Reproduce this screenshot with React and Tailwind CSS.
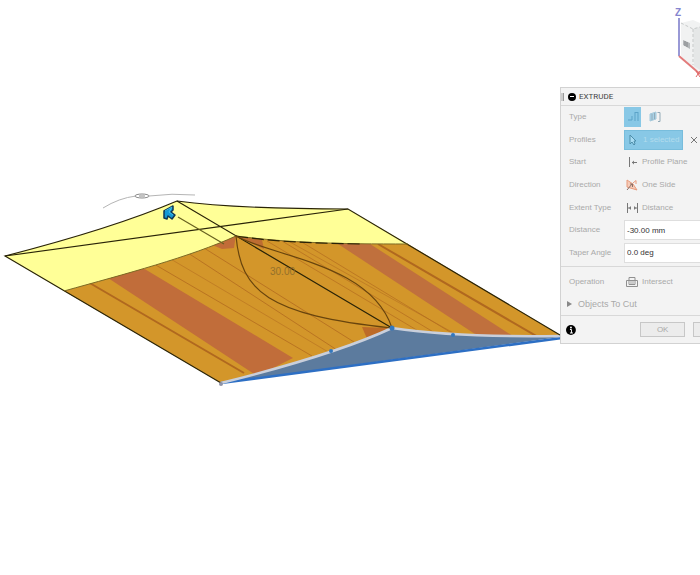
import React from 'react';

function Model() {
  return (
    <svg className="block h-[575px] w-[700px] shrink-0" viewBox="0 0 700 575" role="img" aria-label="Extruded body preview">
      <defs>
        <clipPath id="body">
          <path d="M64 291 C125 274 190 257 236 236 C290 243 340 244 408 244 L560 335 C500 337 440 335 392 328 C345 350 285 367 221 383Z" />
        </clipPath>
      </defs>
      <path d="M5 256 C75 238 130 221 177 201 C230 208 290 209 348 209 L408 244 L236 300 L64 291Z" fill="#ffff97" />
      <path d="M64 291 C125 274 190 257 236 236 C290 243 340 244 408 244 L560 335 C500 337 440 335 392 328 C345 350 285 367 221 383Z" fill="#d3962a" />
      <g clipPath="url(#body)">
        <path d="M105 276 L143 268 L293 358 L257 376Z" fill="#c16d3a" />
        <path d="M332 240 L367 242 L516 338 L481 338Z" fill="#c0703d" />
        <path d="M210 244 L236 234 L234 248 L222 249Z" fill="#c26d38" />
        <path d="M236 236 L262 240 L264 249Z" fill="#bd6d32" />
        <path d="M362 327 L388 328 L368 341Z" fill="#bd6b28" />
        <g stroke="#b0681f" fill="none">
          <path d="M88 282 L244 373" strokeWidth="2" />
          <path d="M378 244 L538 337" strokeWidth="2" />
          <path d="M154 264 L312 356 M188 253 L337 350 M204 248 L354 342" strokeWidth="1" opacity=".75" />
          <path d="M267 241 L420 332 M282 241 L435 333 M300 241 L455 335" strokeWidth="1" opacity=".65" />
          <path d="M169 258 L330 353 M290 242 L459 336" strokeWidth="1" opacity=".5" />
        </g>
      </g>
      <path d="M221 383 C285 367 345 350 392 328 C440 335 500 337 560 337Z" fill="#5c7b9e" />
      <path d="M221 383 L562 338" stroke="#2d6fc4" strokeWidth="2.5" fill="none" />
      <path d="M221 383 C285 367 345 350 392 328 C440 335 500 337 560 336" stroke="#c9cfdb" strokeWidth="2.5" fill="none" />
      <g fill="none" stroke="#292307" strokeWidth="1.2">
        <path d="M221 383 L5 256 C75 238 130 221 177 201 C230 208 290 209 348 209 L560 335" />
        <path d="M5 256 L348 209 M177 201 L392 328" />
        <path d="M178 217 L224 244" stroke="#67601f" />
        <path d="M64 291 C125 274 190 257 236 236" stroke="#7c6a25" strokeWidth="1" />
        <path d="M236 236 C290 243 340 244 408 244" stroke="#7c6a25" strokeWidth="1" />
        <path d="M236 236 C275 242 310 243 360 244" strokeDasharray="12 4" />
        <path d="M236 236 C241 291 267 315 392 328 M236 236 C274 257 371 264 392 328" stroke="#68440d" />
      </g>
      <g fill="#3478bd">
        <circle cx="331" cy="351" r="2" />
        <circle cx="392" cy="328" r="2.5" />
        <circle cx="453" cy="335" r="2" />
      </g>
      <circle cx="221" cy="384" r="2" fill="#8e93a8" />
      <text x="270" y="275" fontSize="10" fill="#94712b" className="font-['Liberation_Sans',sans-serif]">30.00</text>
      <path d="M103 208 Q119 198 136 196 M149 196 Q172 193 195 195" stroke="#b5b5b5" fill="none" />
      <ellipse cx="142" cy="196" rx="7" ry="2" fill="#fff" stroke="#888" />
      <path d="M139 196 H145" stroke="#888" />
      <path d="M164 211 L173 206 L173 210 L171 212 L175 215 L172 219 L168 216 L167 219 L164 218Z" fill="#1599d6" stroke="#123854" strokeWidth="1.5" strokeLinejoin="round" />
      <path d="M165 211 L172 207 L169 212 L173 215" stroke="#3fc0ec" fill="none" />

      <path d="M681 23 L693 20 L700 23 V71 L694 69 L681 56Z" fill="#f1f2f2" />
      <path d="M693 29 L700 27 V70 L694 66Z" fill="#e5e7e7" />
      <path d="M681 23 L693 29 L700 27 M693 29 V65" stroke="#c6c9c9" strokeDasharray="3 2" fill="none" />
      <path d="M679 18 V56" stroke="#7777c8" strokeWidth="1.5" />
      <path d="M679 56 L700 74" stroke="#e27b7b" strokeWidth="2" />
      <path d="M683 40 L690 43 V49 L683 45Z" fill="#b5b8ba" />
      <path d="M685 41 V46 M687 42 V47" stroke="#84878a" />
      <text x="675" y="16" fontSize="10" fontWeight="bold" fill="#8585cf" className="font-['Liberation_Sans',sans-serif]">Z</text>
      <path d="M696 71 L700 77 M700 71 L696 77" stroke="#e06666" fill="none" />
    </svg>
  );
}

function Icon({ children }) {
  return <svg className="size-3 shrink-0" viewBox="0 0 12 12" fill="none" stroke="#777" aria-hidden="true">{children}</svg>;
}

function Row({ label, htmlFor, children }) {
  return (
    <div className="flex items-center pl-2">
      {htmlFor ? <label htmlFor={htmlFor} className="w-[55px] shrink-0">{label}</label> : <span className="w-[55px] shrink-0">{label}</span>}
      {children}
    </div>
  );
}

function Choice({ icon, children }) {
  return <button type="button" className="flex items-center gap-1 pl-0.5">{icon}<span>{children}</span></button>;
}

export default function App() {
  const input = "h-5 w-24 border border-[#dedede] bg-white px-0.5 text-[#333] outline-none";
  return (
    <main className="relative min-h-screen w-full overflow-hidden bg-white font-['Liberation_Sans',Arial,sans-serif]">
      <Model />
      <section aria-label="Extrude" className="absolute left-[560px] top-[87px] w-[180px] border border-[#d2d2d2] bg-[#f3f3f3] text-[8px] leading-[10px] text-[#a9a9a9]">
        <header className="flex h-[18px] items-center border-b border-[#d8d8d8] text-[#444]">
          <span className="mr-1 h-2 w-[3px] border-r border-[#999] bg-[#ccc]" />
          <button type="button" aria-label="Collapse" className="mr-[3px] flex size-2 items-center justify-center rounded-full bg-black"><span className="h-px w-1 bg-white" /></button>
          <h1 className="font-['Roboto',sans-serif]">EXTRUDE</h1>
        </header>
        <div className="grid h-[158px] grid-rows-7">
          <Row label="Type">
            <button type="button" aria-label="Solid extrude" className="flex h-5 w-[17px] items-center justify-center bg-[#88c8e6]">
              <Icon><path d="M1 9 H5 V5 M8 1 V10 M8 1.5 H11 M11 1 V10" stroke="#5ba3c8" /></Icon>
            </button>
            <button type="button" aria-label="Thin extrude" className="ml-2 flex size-3">
              <Icon><path d="M1 3 L7 1 V8 L1 10Z" fill="#a9d3e8" stroke="#a4c8da" /><path d="M3 3 V9 M5.5 2 V8 M8.5 1.5 H11 V10.5 H9" stroke="#94abb8" /></Icon>
            </button>
          </Row>
          <Row label="Profiles">
            <button type="button" className="flex h-5 w-[59px] items-center gap-1 border border-[#78bddc] bg-[#88c8e6] pl-0.5 text-[#b2dced]">
              <Icon><path d="M3 1 V10 L5 8 L7 11 L8 10 L7 7 H9Z" fill="#a8dcf3" stroke="#4d8eaa" /></Icon>1 selected
            </button>
            <button type="button" aria-label="Clear selection" className="ml-[5px] flex size-3">
              <Icon><path d="M3 3 L9 9 M9 3 L3 9" /></Icon>
            </button>
          </Row>
          <Row label="Start"><Choice icon={<Icon><path d="M3.5 1 V11 M6 6.5 H11" /><path d="M8 4.5 L6 6.5 L8 8.5Z" fill="#777" stroke="none" /></Icon>}>Profile Plane</Choice></Row>
          <Row label="Direction"><Choice icon={<Icon><path d="M1 1 L7 5 L11 11 L1 8Z" fill="#f5cbb8" stroke="#e89a7b" /><path d="M1 11 L6 5 M4 5 H6.5 V8" stroke="#8a6f66" /><path d="M7 4 L10 1.5 V5" stroke="#e89a7b" /></Icon>}>One Side</Choice></Row>
          <Row label="Extent Type"><Choice icon={<Icon><path d="M1.5 1 V11 M11.5 1 V11 M2 6 H5 M8 6 H11" /><path d="M5 4 L3 6 L5 8Z M8 4 L10 6 L8 8Z" fill="#777" stroke="none" /></Icon>}>Distance</Choice></Row>
          <Row label="Distance" htmlFor="distance"><input id="distance" defaultValue="-30.00 mm" className={input} /></Row>
          <Row label="Taper Angle" htmlFor="taper"><input id="taper" defaultValue="0.0 deg" className={input} /></Row>
        </div>
        <div className="mt-[2px] grid h-[50px] grid-rows-2 border-y border-[#d8d8d8] pt-1">
          <Row label="Operation"><Choice icon={<Icon><path d="M3 1.5 H9 V8.5 H3Z M.5 4.5 H11.5 V10.5 H.5Z" stroke="#909090" /><path d="M3.5 5 H8.5 V8 H3.5Z" fill="#ccc" stroke="none" /></Icon>}>Intersect</Choice></Row>
          <button type="button" className="flex items-center gap-1 pl-[5px] text-[9px]">
            <svg className="size-2" viewBox="0 0 8 8" aria-hidden="true"><path d="M1 1 L6 4 L1 7Z" fill="#888" /></svg>
            Objects To Cut
          </button>
        </div>
        <footer className="flex h-[27px] items-center gap-1 pl-[5px]">
          <button type="button" aria-label="Information" className="flex size-[10px] items-center justify-center">
            <svg className="size-full" viewBox="0 0 10 10"><circle cx="5" cy="5" r="5" fill="#000" /><circle cx="5" cy="2.5" r="1" fill="#fff" /><path d="M4 4.5 H5.5 V8 M4 8 H7" stroke="#fff" fill="none" /></svg>
          </button>
          <button type="button" className="ml-[60px] h-[15px] w-[46px] border border-[#c7c7c7] bg-[#ececec] text-center">OK</button>
          <button type="button" aria-label="Cancel" className="ml-1 h-[15px] w-[46px] border border-[#c7c7c7] bg-[#ececec]" />
        </footer>
      </section>
    </main>
  );
}
